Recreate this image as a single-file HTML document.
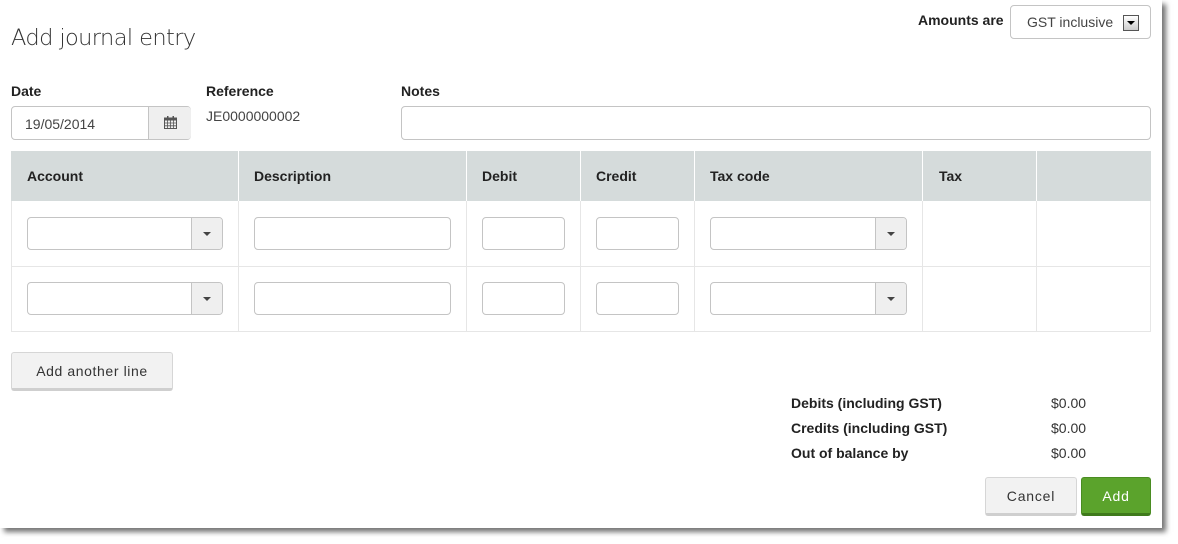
<!DOCTYPE html>
<html><head><style>
*{box-sizing:border-box;margin:0;padding:0}
body{width:1178px;height:544px;background:#fff;position:relative;font-family:"Liberation Sans",Arial,sans-serif;font-size:14px;color:#333;overflow:hidden}
.page{position:absolute;left:0;top:0;width:1162px;height:528px;background:#fff;box-shadow:4px 4px 5px rgba(0,0,0,.55)}
.a{position:absolute}
.b{font-weight:bold;font-size:14px;color:#222}
.inp{position:absolute;border:1px solid #c4c4c4;border-radius:4px;background:#fff;height:33px}
.sel .btn{position:absolute;right:0;top:0;bottom:0;width:31px;background:#efefef;border-left:1px solid #c4c4c4;border-radius:0 3px 3px 0}
.sel .btn:after{content:"";position:absolute;left:11px;top:14px;border-left:4px solid transparent;border-right:4px solid transparent;border-top:4px solid #444}
.hl{position:absolute;top:151px;height:50px;background:#d5dbdb}
.vl{position:absolute;width:1px;background:#e6e6e6}
</style></head><body>
<div class="page">
<div class="a" style="left:11px;top:25px;font-size:22.5px;font-family:'DejaVu Sans',sans-serif;font-weight:200;color:#333;letter-spacing:-0.6px">Add journal entry</div>
<div class="a b" style="left:918px;top:12px">Amounts are</div>
<div class="inp" style="left:1010px;top:5px;width:141px;height:34px"><span class="a" style="left:16px;top:8px;color:#444">GST inclusive</span><span class="a" style="left:112px;top:9px;width:16px;height:16px;border:1px solid #555;background:linear-gradient(#fff,#ccc)"><span class="a" style="left:3px;top:5px;border-left:4px solid transparent;border-right:4px solid transparent;border-top:4px solid #000"></span></span></div>
<div class="a b" style="left:11px;top:83px">Date</div>
<div class="a b" style="left:206px;top:83px">Reference</div>
<div class="a b" style="left:401px;top:83px">Notes</div>
<div class="inp" style="left:11px;top:106px;width:180px;height:34px;border-radius:4px"><span class="a" style="left:13px;top:9px;font-size:14px;color:#444">19/05/2014</span><span class="a" style="left:136px;top:0;width:43px;height:32px;background:#efefef;border-left:1px solid #c4c4c4;border-radius:0 3px 3px 0"><svg class="a" style="left:15px;top:9px" width="13" height="13" viewBox="0 0 13 13"><rect x="0.5" y="2" width="12" height="10.5" fill="none" stroke="#555"/><rect x="0.5" y="2" width="12" height="2.5" fill="#555"/><path d="M0.5 7h12M0.5 9.8h12M3.5 4.5v8M6.5 4.5v8M9.5 4.5v8" stroke="#555" stroke-width="0.8"/><rect x="3" y="0" width="1.5" height="3" fill="#555"/><rect x="8.5" y="0" width="1.5" height="3" fill="#555"/></svg></span></div>
<div class="a" style="left:206px;top:108px;font-size:14px;color:#444">JE0000000002</div>
<div class="inp" style="left:401px;top:106px;width:750px;height:34px"></div>

<div class="a" style="left:11px;top:151px;width:1140px;height:181px;border:1px solid #e6e6e6;border-top:none"></div>
<div class="hl" style="left:11px;width:1140px"></div>
<div class="vl" style="left:238px;top:151px;height:180px;background:#fff"></div>
<div class="vl" style="left:466px;top:151px;height:180px;background:#fff"></div>
<div class="vl" style="left:580px;top:151px;height:180px;background:#fff"></div>
<div class="vl" style="left:694px;top:151px;height:180px;background:#fff"></div>
<div class="vl" style="left:922px;top:151px;height:180px;background:#fff"></div>
<div class="vl" style="left:1036px;top:151px;height:180px;background:#fff"></div>
<div class="vl" style="left:238px;top:201px;height:130px"></div>
<div class="vl" style="left:466px;top:201px;height:130px"></div>
<div class="vl" style="left:580px;top:201px;height:130px"></div>
<div class="vl" style="left:694px;top:201px;height:130px"></div>
<div class="vl" style="left:922px;top:201px;height:130px"></div>
<div class="vl" style="left:1036px;top:201px;height:130px"></div>
<div class="a" style="left:11px;top:266px;width:1140px;height:1px;background:#e6e6e6"></div>
<div class="a b" style="left:27px;top:168px">Account</div>
<div class="a b" style="left:254px;top:168px">Description</div>
<div class="a b" style="left:482px;top:168px">Debit</div>
<div class="a b" style="left:596px;top:168px">Credit</div>
<div class="a b" style="left:710px;top:168px">Tax code</div>
<div class="a b" style="left:939px;top:168px">Tax</div>

<div class="inp sel" style="left:27px;top:217px;width:196px"><div class="btn"></div></div>
<div class="inp" style="left:254px;top:217px;width:197px"></div>
<div class="inp" style="left:482px;top:217px;width:83px"></div>
<div class="inp" style="left:596px;top:217px;width:83px"></div>
<div class="inp sel" style="left:710px;top:217px;width:197px"><div class="btn"></div></div>
<div class="inp sel" style="left:27px;top:282px;width:196px"><div class="btn"></div></div>
<div class="inp" style="left:254px;top:282px;width:197px"></div>
<div class="inp" style="left:482px;top:282px;width:83px"></div>
<div class="inp" style="left:596px;top:282px;width:83px"></div>
<div class="inp sel" style="left:710px;top:282px;width:197px"><div class="btn"></div></div>

<div class="a" style="left:11px;top:352px;width:162px;height:39px;background:#f2f2f2;border:1px solid #d6d6d6;border-bottom:3px solid #cfcfcf;border-radius:3px;text-align:center;line-height:36px;letter-spacing:0.6px;color:#333">Add another line</div>

<div class="a b" style="left:791px;top:395px">Debits (including GST)</div>
<div class="a b" style="left:791px;top:420px">Credits (including GST)</div>
<div class="a b" style="left:791px;top:445px">Out of balance by</div>
<div class="a" style="left:1051px;top:395px;color:#333">$0.00</div>
<div class="a" style="left:1051px;top:420px;color:#333">$0.00</div>
<div class="a" style="left:1051px;top:445px;color:#333">$0.00</div>

<div class="a" style="left:985px;top:477px;width:92px;height:39px;background:#f2f2f2;border:1px solid #d6d6d6;border-bottom:3px solid #cfcfcf;border-radius:3px;text-align:center;line-height:36px;letter-spacing:0.8px;color:#333">Cancel</div>
<div class="a" style="left:1081px;top:477px;width:70px;height:39px;background:#5ba32c;border:1px solid #4a8c22;border-bottom:3px solid #3f7a1c;border-radius:3px;text-align:center;line-height:36px;letter-spacing:0.8px;color:#fff">Add</div>
</div>
</body></html>
